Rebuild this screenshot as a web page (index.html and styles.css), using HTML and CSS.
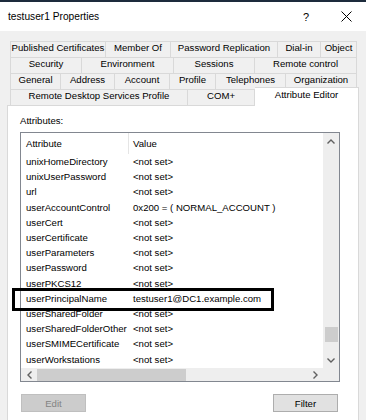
FILE: index.html
```html
<!DOCTYPE html>
<html lang="en">
<head>
    <meta charset="UTF-8">
    <meta name="viewport" content="width=device-width, initial-scale=1.0">
    <title>testuser1 Properties</title>
    <link rel="stylesheet" href="styles.css">
</head>
<body>
    <div class="window">
        <div class="titlebar">
            <span class="title">testuser1 Properties</span>
            <span class="help">?</span>
            <span class="close">
                <svg width="11" height="11" viewBox="0 0 11 11"><path d="M0.5 0.5 L10.5 10.5 M10.5 0.5 L0.5 10.5" stroke="#000" stroke-width="1" fill="none"/></svg>
            </span>
        </div>

        <div class="content">
            <!-- tab rows, top to bottom -->
            <div class="tabs">
                <div class="tab-row row-1">
                    <span class="tab">Published Certificates</span>
                    <span class="tab">Member Of</span>
                    <span class="tab">Password Replication</span>
                    <span class="tab">Dial-in</span>
                    <span class="tab">Object</span>
                </div>
                <div class="tab-row row-2">
                    <span class="tab">Security</span>
                    <span class="tab">Environment</span>
                    <span class="tab">Sessions</span>
                    <span class="tab">Remote control</span>
                </div>
                <div class="tab-row row-3">
                    <span class="tab">General</span>
                    <span class="tab">Address</span>
                    <span class="tab">Account</span>
                    <span class="tab">Profile</span>
                    <span class="tab">Telephones</span>
                    <span class="tab">Organization</span>
                </div>
                <div class="tab-row row-4">
                    <span class="tab">Remote Desktop Services Profile</span>
                    <span class="tab">COM+</span>
                    <span class="tab active">Attribute Editor</span>
                </div>
            </div>

            <div class="panel">
                <div class="label">Attributes:</div>
                <div class="list">
                    <div class="list-top">
                        <div class="list-main">
                            <div class="list-head">
                                <span class="col-attr">Attribute</span>
                                <span class="col-val">Value</span>
                            </div>
                            <div class="row"><span class="col-attr">unixHomeDirectory</span><span class="col-val">&lt;not set&gt;</span></div>
                            <div class="row"><span class="col-attr">unixUserPassword</span><span class="col-val">&lt;not set&gt;</span></div>
                            <div class="row"><span class="col-attr">url</span><span class="col-val">&lt;not set&gt;</span></div>
                            <div class="row"><span class="col-attr">userAccountControl</span><span class="col-val">0x200 = ( NORMAL_ACCOUNT )</span></div>
                            <div class="row"><span class="col-attr">userCert</span><span class="col-val">&lt;not set&gt;</span></div>
                            <div class="row"><span class="col-attr">userCertificate</span><span class="col-val">&lt;not set&gt;</span></div>
                            <div class="row"><span class="col-attr">userParameters</span><span class="col-val">&lt;not set&gt;</span></div>
                            <div class="row"><span class="col-attr">userPassword</span><span class="col-val">&lt;not set&gt;</span></div>
                            <div class="row"><span class="col-attr">userPKCS12</span><span class="col-val">&lt;not set&gt;</span></div>
                            <div class="row"><span class="col-attr">userPrincipalName</span><span class="col-val">testuser1@DC1.example.com</span></div>
                            <div class="row"><span class="col-attr">userSharedFolder</span><span class="col-val">&lt;not set&gt;</span></div>
                            <div class="row"><span class="col-attr">userSharedFolderOther</span><span class="col-val">&lt;not set&gt;</span></div>
                            <div class="row"><span class="col-attr">userSMIMECertificate</span><span class="col-val">&lt;not set&gt;</span></div>
                            <div class="row"><span class="col-attr">userWorkstations</span><span class="col-val">&lt;not set&gt;</span></div>
                        </div>
                        <div class="vscroll">
                            <span class="arrow">
                                <svg width="8" height="5" viewBox="0 0 8 5"><path d="M0.5 4.5 L4 1 L7.5 4.5" stroke="#606060" stroke-width="1.4" fill="none"/></svg>
                            </span>
                            <span class="vthumb"></span>
                            <span class="arrow">
                                <svg width="8" height="5" viewBox="0 0 8 5"><path d="M0.5 0.5 L4 4 L7.5 0.5" stroke="#606060" stroke-width="1.4" fill="none"/></svg>
                            </span>
                        </div>
                    </div>
                    <div class="list-bottom">
                        <div class="hscroll">
                            <span class="arrow">
                                <svg width="5" height="8" viewBox="0 0 5 8"><path d="M4.5 0.5 L1 4 L4.5 7.5" stroke="#606060" stroke-width="1.4" fill="none"/></svg>
                            </span>
                            <span class="hthumb"></span>
                            <span class="arrow">
                                <svg width="5" height="8" viewBox="0 0 5 8"><path d="M0.5 0.5 L4 4 L0.5 7.5" stroke="#606060" stroke-width="1.4" fill="none"/></svg>
                            </span>
                        </div>
                        <div class="corner"></div>
                    </div>
                </div>

                <div class="buttons">
                    <button class="btn" disabled>Edit</button>
                    <button class="btn">Filter</button>
                </div>

                <!-- annotation box drawn over the list -->
                <div class="highlight"></div>
            </div>
        </div>
    </div>
</body>
</html>
```

FILE: styles.css
```css
* {
    box-sizing: border-box;
}
body {
    margin: 0;
    font-family: "Liberation Sans", Arial, sans-serif;
    font-size: 9.6px;
    color: #000;
    background: #f0f0f0;
}
.window {
    width: 366px;
    height: 420px;
    background: #f0f0f0;
    border-top: 2px solid #1d2b3c;
    overflow: hidden;
}
.titlebar {
    height: 29px;
    background: #fff;
    display: flex;
    align-items: center;
    padding-left: 8px;
}
.title {
    flex: 1;
    font-size: 10.2px;
}
.help {
    width: 40px;
    text-align: center;
    font-size: 11px;
}
.close {
    width: 40px;
    display: flex;
    justify-content: center;
}
.content {
    padding: 10px 7px 0 7px;
}
.tabs {
    display: flex;
    flex-direction: column;
}
.tab-row {
    display: grid;
    height: 16px;
    margin: 0 2px 0 3px;
}
.row-1 { grid-template-columns: 96px 65px 107px 43px 1fr; }
.row-2 { grid-template-columns: 72px 92px 81px 1fr; }
.row-3 { grid-template-columns: 51px 54px 55px 46px 70px 1fr; }
.row-4 { grid-template-columns: 178px 67px 1fr; }
.tab {
    line-height: 12px;
    text-align: center;
    white-space: nowrap;
    overflow: hidden;
    border-top: 1px solid #d9d9d9;
    border-right: 1px solid #d9d9d9;
    background: #f0f0f0;
}
.tab:first-child {
    border-left: 1px solid #d9d9d9;
}
.tab.active {
    background: #fff;
    margin: -2px -2px -1px 0;
    line-height: 14px;
    position: relative;
    z-index: 1;
}
.panel {
    position: relative;
    background: #fff;
    border: 1px solid #d9d9d9;
    height: 320px;
    padding: 8px 18px 0 12px;
}
.label {
    line-height: 14px;
    margin-bottom: 4px;
}
.list {
    width: 320px;
    height: 250px;
    border: 1px solid #828790;
    display: flex;
    flex-direction: column;
}
.list-top {
    display: flex;
    height: 235px;
    flex-shrink: 0;
}
.list-main {
    width: 302px;
    overflow: hidden;
}
.list-head {
    display: flex;
    height: 21px;
    align-items: center;
}
.list-head .col-val {
    border-left: 1px solid #e5e5e5;
    padding-left: 4px;
    align-self: stretch;
    display: flex;
    align-items: center;
}
.row {
    display: flex;
    align-items: center;
    height: 15.2px;
}
.col-attr {
    width: 107px;
    padding-left: 5px;
    white-space: nowrap;
}
.col-val {
    padding-left: 5px;
    white-space: nowrap;
}
.vscroll {
    width: 16px;
    background: #eeeeee;
    display: flex;
    flex-direction: column;
    align-items: center;
}
.vscroll .arrow {
    width: 16px;
    height: 16px;
    display: flex;
    align-items: center;
    justify-content: center;
}
.vthumb {
    width: 13px;
    height: 15px;
    background: #cdcdcd;
    margin: auto 0 10px;
}
.list-bottom {
    display: flex;
    height: 13px;
    flex-shrink: 0;
    background: #eeeeee;
}
.hscroll {
    width: 302px;
    display: flex;
    align-items: center;
}
.hscroll .arrow {
    width: 16px;
    height: 13px;
    display: flex;
    align-items: center;
    justify-content: center;
}
.hthumb {
    width: 149px;
    height: 12px;
    background: #cdcdcd;
    margin-right: auto;
}
.corner {
    width: 16px;
}
.buttons {
    display: flex;
    justify-content: space-between;
    margin: 12px 2px 0 1px;
}
.btn {
    width: 65px;
    height: 18px;
    font-family: inherit;
    font-size: 9.6px;
    padding: 0;
    background: #e1e1e1;
    border: 1px solid #adadad;
    color: #000;
}
.btn:disabled {
    background: #cccccc;
    border-color: #bfbfbf;
    color: #838383;
}
.highlight {
    position: absolute;
    left: 4px;
    top: 182px;
    width: 262px;
    height: 23px;
    border: 3px solid #000;
}
```
